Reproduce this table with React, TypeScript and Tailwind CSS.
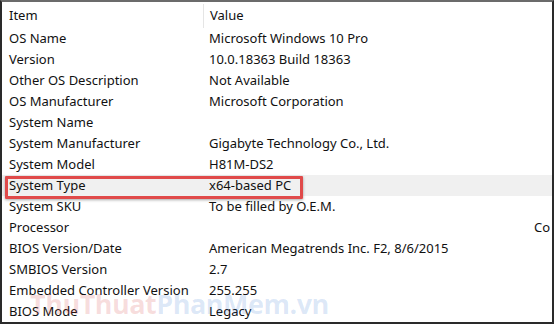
const rows: [string, string][] = [
  ["OS Name", "Microsoft Windows 10 Pro"],
  ["Version", "10.0.18363 Build 18363"],
  ["Other OS Description", "Not Available"],
  ["OS Manufacturer", "Microsoft Corporation"],
  ["System Name", ""],
  ["System Manufacturer", "Gigabyte Technology Co., Ltd."],
  ["System Model", "H81M-DS2"],
  ["System Type", "x64-based PC"],
  ["System SKU", "To be filled by O.E.M."],
  ["Processor", ""],
  ["BIOS Version/Date", "American Megatrends Inc. F2, 8/6/2015"],
  ["SMBIOS Version", "2.7"],
  ["Embedded Controller Version", "255.255"],
  ["BIOS Mode", "Legacy"],
];

export default function App() {
  return (
    <div className="relative w-[554px] h-[324px] overflow-hidden bg-white border-2 border-[#2a2a2a] border-t-[#6b6b6b] font-['Segoe_UI','Noto_Sans',sans-serif] text-[13px] text-[#111]">
      <div className="grid grid-cols-[201px_1fr] h-[26px] items-center pt-[2px]">
        <div className="pl-[7px]">Item</div>
        <div className="h-full flex items-center pl-[6px] border-l border-[#e5e5e5]">Value</div>
      </div>
      {rows.map(([item, value]) => {
        const selected = item === "System Type";
        return (
          <div
            key={item}
            className={
              selected
                ? "relative grid grid-cols-[202px_1fr] h-[21px] items-center bg-[#f0f0f0]"
                : "relative grid grid-cols-[202px_1fr] h-[21px] items-center"
            }
          >
            <div className="pl-[7px] whitespace-nowrap">{item}</div>
            <div className="pl-[5px] whitespace-nowrap">{value}</div>
            {item === "Processor" && (
              <div className="absolute left-[532px] top-0 w-[16px] h-full overflow-hidden flex items-center whitespace-nowrap">
                Core
              </div>
            )}
            {selected && (
              <div className="absolute left-[3px] top-[1px] w-[298px] h-[23px] border-[3px] border-[#e04a4a] rounded-[1px] shadow-[0_1px_3px_rgba(0,0,0,0.35)]" />
            )}
          </div>
        );
      })}
      <div className="absolute left-[28px] top-[288px] flex font-['Open_Sans',sans-serif] font-bold text-[27px] tracking-[-0.5px] leading-none select-none pointer-events-none">
        <span className="text-[rgba(210,40,40,0.16)]">ThuThuat</span>
        <span className="text-[rgba(40,110,210,0.16)]">PhanMem.vn</span>
      </div>
    </div>
  );
}
